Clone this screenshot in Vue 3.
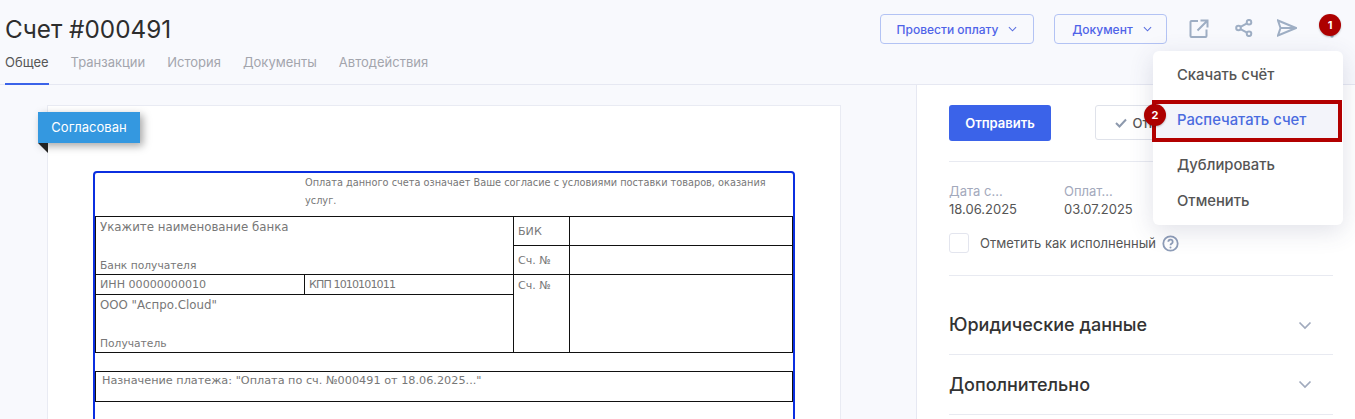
<script setup>
const tabs = ['Общее', 'Транзакции', 'История', 'Документы', 'Автодействия']
const accordions = ['Юридические данные', 'Дополнительно']
</script>

<template>
  <div class="page">
    <header class="top">
      <div class="head-left">
        <h1 class="title">Счет #000491</h1>
        <nav class="tabs">
          <span v-for="(t, i) in tabs" :key="t" class="tab" :class="{ active: i === 0 }">{{ t }}</span>
        </nav>
      </div>
      <div class="actions">
        <button class="outline pay">Провести оплату
          <svg class="chev" width="9" height="6" viewBox="0 0 10 6"><path d="M1 1l4 4 4-4" /></svg>
        </button>
        <button class="outline doc">Документ
          <svg class="chev" width="9" height="6" viewBox="0 0 10 6"><path d="M1 1l4 4 4-4" /></svg>
        </button>
        <svg class="ico ext" width="20" height="20" viewBox="0 0 20 20">
          <path d="M9 2H2.500a1 1 0 0 0-1 1v14a1 1 0 0 0 1 1h14a1 1 0 0 0 1-1v-6.500" />
          <path d="M8.500 11.500L18 2M11.500 1.500H18.500V8.500" />
        </svg>
        <svg class="ico share" width="18" height="18" viewBox="0 0 18 18">
          <circle cx="3.500" cy="9" r="2.300" /><circle cx="14" cy="3.200" r="2.300" /><circle cx="14" cy="14.800" r="2.300" />
          <path d="M5.500 7.900l6.500-3.600M5.500 10.100l6.500 3.600" />
        </svg>
        <svg class="ico send" width="20" height="18" viewBox="0 0 20 18">
          <path d="M1 1.500L19 9 1 16.500 3.500 9zM3.500 9H19" />
        </svg>
        <svg class="kebab" width="4" height="20" viewBox="0 0 4 20">
          <circle cx="2" cy="2" r="1.700" /><circle cx="2" cy="10" r="1.700" /><circle cx="2" cy="18" r="1.700" />
        </svg>
      </div>
    </header>

    <div class="body">
      <main class="doc-area">
        <div class="sheet">
          <div class="frame">
            <p class="notice">Оплата данного счета означает Ваше согласие с условиями поставки товаров, оказания услуг.</p>
            <table class="bank">
              <colgroup><col class="c1" /><col class="c1" /><col class="c2" /><col class="c3" /></colgroup>
              <tbody>
                <tr class="r29">
                  <td colspan="2" rowspan="2" class="stack">
                    <span>Укажите наименование банка</span><span class="sm">Банк получателя</span>
                  </td>
                  <td>БИК</td><td></td>
                </tr>
                <tr class="r29"><td>Сч. №</td><td></td></tr>
                <tr class="r20">
                  <td>ИНН 00000000010</td><td class="kpp">КПП 1010101011</td>
                  <td rowspan="2" class="top-cell">Сч. №</td><td rowspan="2"></td>
                </tr>
                <tr class="r58">
                  <td colspan="2" class="stack">
                    <span>ООО "Аспро.Cloud"</span><span class="sm">Получатель</span>
                  </td>
                </tr>
              </tbody>
            </table>
            <div class="purpose">Назначение платежа: "Оплата по сч. №000491 от 18.06.2025..."</div>
          </div>
        </div>
        <div class="ribbon">Согласован</div>
      </main>

      <aside class="side">
        <div class="btn-row">
          <button class="primary">Отправить</button>
          <button class="secondary">
            <svg width="12" height="10" viewBox="0 0 12 10"><path d="M1 5l3.500 3.500L11 1.500" /></svg>
            Отклонить
          </button>
        </div>
        <div class="dates">
          <div class="date"><span class="lbl">Дата с...</span><span class="val">18.06.2025</span></div>
          <div class="date"><span class="lbl">Оплат...</span><span class="val">03.07.2025</span></div>
        </div>
        <div class="check-row">
          <span class="box"></span>
          <span class="check-text">Отметить как исполненный</span>
          <svg class="help" width="17" height="17" viewBox="0 0 17 17">
            <circle cx="8.500" cy="8.500" r="7.200" />
            <path d="M6.300 6.700a2.200 2.200 0 1 1 3.400 1.900c-.8.500-1.200.9-1.200 1.700" />
            <circle class="dot" cx="8.500" cy="12.600" r="1" />
          </svg>
        </div>
        <section v-for="a in accordions" :key="a" class="acc">
          <span>{{ a }}</span>
          <svg class="acc-chev" width="14" height="9" viewBox="0 0 14 9"><path d="M1.500 1.500L7 7l5.500-5.500" /></svg>
        </section>
      </aside>
    </div>

    <div class="menu">
      <div class="item first">Скачать счёт</div>
      <div class="item hl">Распечатать счет</div>
      <div class="item third">Дублировать</div>
      <div class="item fourth">Отменить</div>
    </div>
    <span class="mark m1">1</span>
    <span class="mark m2">2</span>
  </div>
</template>

<style>
html, body { margin: 0; background: #f8f9fd; overflow: hidden; }
</style>

<style scoped>
.page {
  position: relative;
  width: 1355px;
  height: 419px;
  overflow: hidden;
  background: #f8f9fd;
  font-family: Inter, "Liberation Sans", sans-serif;
  color: #333;
}
.top {
  height: 84px;
  border-bottom: 1px solid #e6e8f2;
  display: flex;
  justify-content: space-between;
  padding-left: 5px;
}
.title {
  margin: 13px 0 0;
  font-size: 24.300px;
  line-height: 32px;
  font-weight: 400;
  color: #2d2d2d;
}
.tabs {
  display: flex;
  gap: 22px;
  margin-top: 1px;
}
.tab {
  font-size: 13px;
  line-height: 16px;
  padding: 8px 0 13px;
  color: #a3a5ad;
  border-bottom: 2px solid transparent;
  height: 16px;
}
.tab.active {
  color: #555;
  border-bottom-color: #3b63e9;
}
.actions {
  display: flex;
  align-items: flex-start;
  padding-top: 14px;
  width: 475px;
  box-sizing: border-box;
}
button {
  font-family: inherit;
  box-sizing: border-box;
}
.outline {
  height: 30px;
  border: 1px solid #b3c3f4;
  border-radius: 4px;
  background: transparent;
  color: #4f63e8;
  font-size: 12px;
  font-weight: 500;
  display: flex;
  align-items: center;
  justify-content: center;
  gap: 10px;
  padding: 0;
}
.pay { width: 154px; margin-right: 20px; }
.doc { width: 113px; margin-right: 22px; padding-left: 3px; }
.chev path {
  fill: none;
  stroke: #5a6fe0;
  stroke-width: 1.200;
}
.ico { margin-top: 5px; fill: none; stroke: #9eaec4; stroke-width: 2; flex: none; }
.ext { margin-right: 26px; }
.share { margin-right: 24px; }
.send { margin-right: 33px; }
.kebab { margin-top: 4px; fill: #9eaec4; flex: none; }
.body { display: flex; height: 334px; }
.doc-area {
  position: relative;
  flex: none;
  width: 917px;
  border-right: 1px solid #e6e8f2;
  box-sizing: border-box;
  padding: 20px 0 0 47px;
}
.sheet {
  width: 794px;
  height: 400px;
  box-sizing: border-box;
  background: #fff;
  border: 1px solid #e9ebf3;
  padding: 65px 45px 0;
}
.frame {
  width: 702px;
  height: 320px;
  box-sizing: border-box;
  border: 2px solid #0b2fe0;
  border-radius: 4px;
  font-family: "DejaVu Sans", sans-serif;
  color: #777;
}
.notice {
  margin: 0;
  height: 43px;
  padding: 1px 20px 0 210px;
  font-size: 9.750px;
  line-height: 18px;
  box-sizing: border-box;
}
.bank {
  table-layout: fixed;
  border-collapse: collapse;
  width: 697px;
  font-size: 11.100px;
  line-height: 14px;
}
.c1 { width: 209px; }
.c2 { width: 56px; }
.c3 { width: 223px; }
.bank td {
  border: 1px solid #111;
  padding: 1px 4px 0;
  box-sizing: border-box;
  vertical-align: middle;
  white-space: nowrap;
}
.bank .kpp { letter-spacing: -0.900px; }
.bank .top-cell { vertical-align: top; padding-top: 4px; }
.bank .stack { vertical-align: top; padding-top: 3px; font-size: 11.800px; }
.stack { position: relative; }
.stack span { display: block; }
.stack .sm { position: absolute; left: 4px; bottom: 1px; font-size: 10.700px; }
.r29 { height: 29px; }
.r20 { height: 20px; }
.r58 { height: 58px; }
.purpose {
  margin-top: 18px;
  width: 698px;
  height: 31px;
  box-sizing: border-box;
  border: 1px solid #111;
  padding: 2px 6px;
  font-size: 11.250px;
  line-height: 14px;
}
.ribbon {
  position: absolute;
  left: 38px;
  top: 27px;
  width: 102px;
  height: 31px;
  background: #3498e0;
  color: #fff;
  font-size: 13px;
  line-height: 31px;
  text-align: center;
  box-shadow: 3px 3px 8px rgba(0, 0, 0, .35);
}
.ribbon::after {
  content: "";
  position: absolute;
  left: 0;
  top: 31px;
  border-top: 10px solid #222;
  border-left: 10px solid transparent;
}
.side {
  flex: 1;
  padding: 20px 22px 0 32px;
  background: #fff;
  min-width: 0;
}
.btn-row {
  display: flex;
  gap: 44px;
  height: 56px;
  border-bottom: 1px solid #e8eaf1;
}
.primary {
  width: 102px;
  height: 36px;
  border: 0;
  border-radius: 3px;
  background: #3b63e9;
  color: #fff;
  font-size: 13px;
  font-weight: 600;
}
.secondary {
  width: 150px;
  height: 35px;
  border: 1px solid #dfe2ea;
  border-radius: 3px;
  background: #fff;
  color: #555;
  font-size: 13px;
  font-weight: 500;
  text-align: left;
  padding-left: 19px;
  white-space: nowrap;
}
.secondary svg { fill: none; stroke: #8d99ad; stroke-width: 2; margin-right: 2px; }
.dates {
  display: flex;
  gap: 32px;
  padding-top: 20px;
}
.date { display: flex; flex-direction: column; width: 83px; }
.lbl { font-size: 13px; line-height: 18px; color: #a3a9bc; }
.val { font-size: 13px; line-height: 18px; color: #555; }
.check-row {
  display: flex;
  align-items: center;
  height: 20px;
  padding: 15px 0 22px;
  border-bottom: 1px solid #e8eaf1;
}
.box {
  width: 20px;
  height: 20px;
  box-sizing: border-box;
  border: 1px solid #e3e5ee;
  border-radius: 3px;
  margin-right: 11px;
}
.check-text { font-size: 13px; color: #555; margin-right: 6px; }
.help { fill: none; stroke: #8e9db8; stroke-width: 1.800; }
.help .dot { fill: #8e9db8; stroke: none; }
.acc {
  height: 59px;
  display: flex;
  align-items: center;
  justify-content: space-between;
  padding: 0 21px 0 0;
  border-bottom: 1px solid #e8eaf1;
  font-size: 18px;
  font-weight: 500;
  color: #333;
}
.acc:first-of-type { height: 78px; align-items: flex-end; }
.acc:first-of-type span { line-height: 22px; margin-bottom: 18px; }
.acc:first-of-type svg { margin-bottom: 24px; }
.acc-chev path { fill: none; stroke: #a0aabd; stroke-width: 1.700; }
.menu {
  position: absolute;
  left: 1153px;
  top: 51px;
  width: 190px;
  height: 174px;
  background: #fff;
  border-radius: 6px;
  box-shadow: 0 6px 24px rgba(60, 70, 110, .16);
  font-size: 14.800px;
  color: #555;
}
.item { position: absolute; left: 0; right: 0; padding-left: 24px; line-height: 22px; font-weight: 500; }
.first { top: 13px; }
.hl {
  left: -1px;
  right: 1px;
  top: 49px;
  height: 42px;
  box-sizing: border-box;
  border: 4px solid #b20000;
  background: #f3f4fa;
  color: #4a6bdf;
  padding-left: 21px;
  line-height: 33px;
}
.third { top: 103px; }
.fourth { top: 139px; }
.mark {
  position: absolute;
  width: 22px;
  height: 22px;
  border-radius: 50%;
  background: #ad0000;
  color: #fff;
  font-size: 11px;
  font-weight: 700;
  line-height: 22px;
  text-align: center;
  box-shadow: 0 1px 2px rgba(0, 0, 0, .25);
}
.m1 { left: 1319px; top: 14px; }
.m2 { left: 1144px; top: 104px; }
</style>
